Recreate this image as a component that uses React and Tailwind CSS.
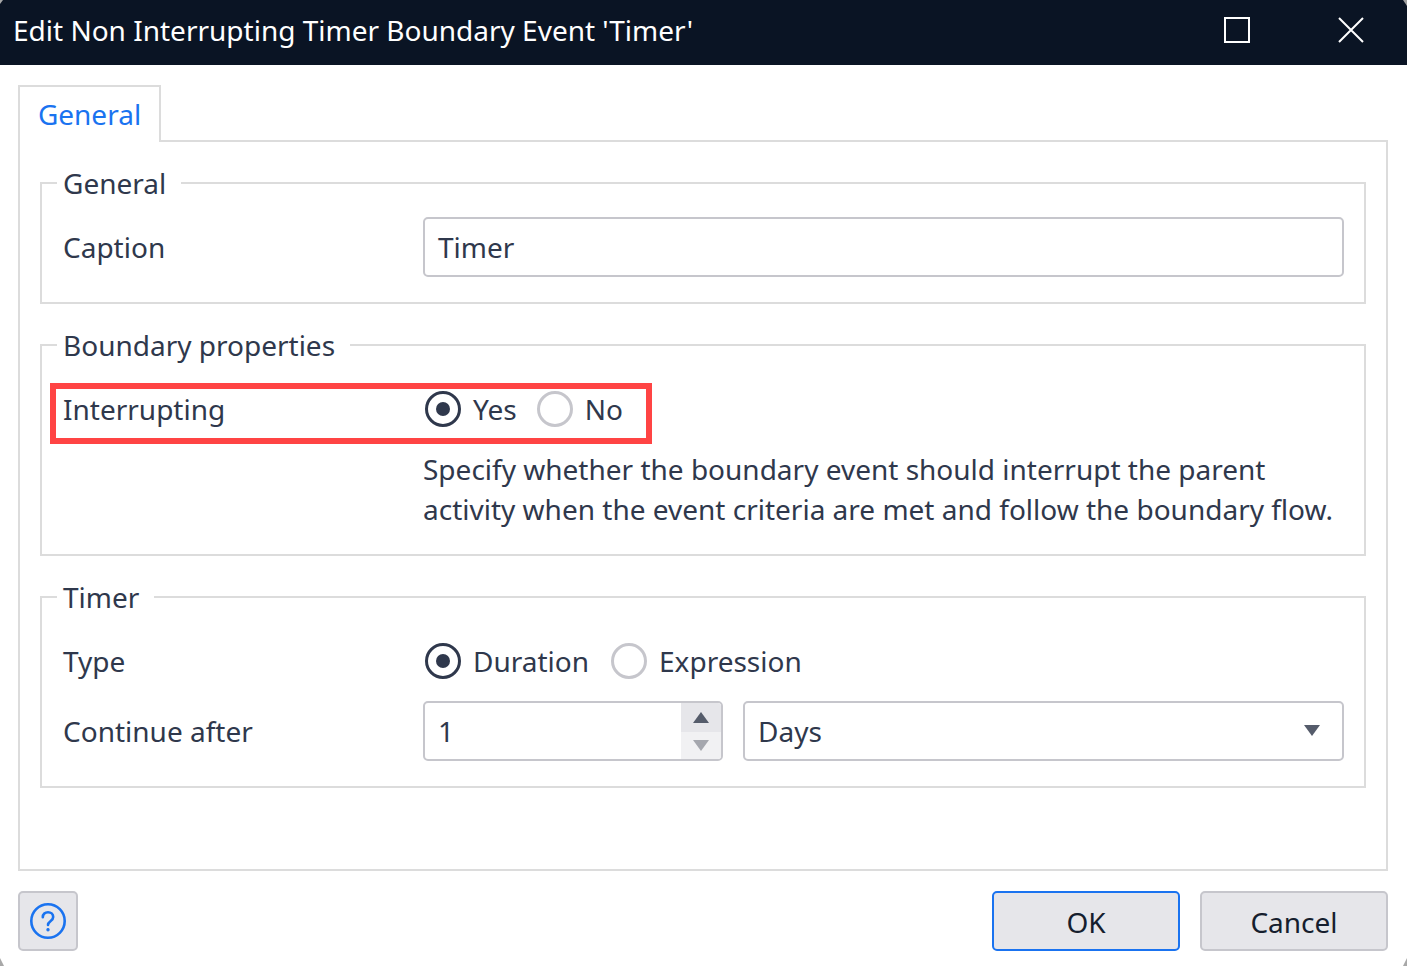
import React from 'react';

const FONT = "font-['Noto_Sans',sans-serif]";

function Radio({ checked, label }) {
	return (
		<span className="flex items-center gap-[12px]">
			<span className={`w-[36px] h-[36px] rounded-full flex items-center justify-center border-[3px] ${checked ? 'border-[#2f384c]' : 'border-[#c6c6cc]'}`}>
				{checked && <span className="w-[14px] h-[14px] rounded-full bg-[#2f384c]"></span>}
			</span>
			<span>{label}</span>
		</span>
	);
}

function Group({ title, children }) {
	return (
		<fieldset className="border-2 border-[#dcdcdc] pl-[21px] pr-[20px] pb-[25px]">
			<legend className="-ml-[6px] pl-[6px] pr-[15px] h-[40px] leading-[40px]">{title}</legend>
			{children}
		</fieldset>
	);
}

function Row({ label, children, className }) {
	return (
		<div className={`grid grid-cols-[360px_1fr] items-center h-[60px] ${className || ''}`}>
			<span>{label}</span>
			{children}
		</div>
	);
}

export default function App() {
	return (
		<div className={`${FONT} relative w-[1407px] h-[966px] bg-white text-[28px] text-[#2f384c] flex flex-col overflow-hidden`}>
			{/* Title bar */}
			<div className="h-[65px] shrink-0 bg-[#0a1424] flex items-center pl-[13px] text-white">
				<span className="flex-1 -mt-[6px]">Edit Non Interrupting Timer Boundary Event 'Timer'</span>
				<svg width="26" height="26" viewBox="0 0 26 26" className="mr-[88px] -mt-[5px]" fill="none" stroke="#fff" strokeWidth="2">
					<rect x="1" y="1" width="24" height="24" />
				</svg>
				<svg width="26" height="26" viewBox="0 0 26 26" className="mr-[43px] -mt-[5px]" fill="none" stroke="#fff" strokeWidth="2">
					<path d="M1 1L25 25M25 1L1 25" />
				</svg>
			</div>

			<div className="flex-1 flex flex-col pl-[18px] pr-[19px] pt-[20px]">
				{/* Tab */}
				<div className="flex h-[57px]">
					<div className="relative z-10 w-[143px] h-[57px] border-2 border-b-0 border-[#dcdcdc] bg-white text-[#1a73f0] flex items-center justify-center pb-[2px]">
						General
					</div>
				</div>

				{/* Tab panel */}
				<div className="h-[731px] -mt-[2px] border-2 border-[#dcdcdc] px-[20px] pt-[21px] flex flex-col gap-[21px]">
					<Group title="General">
						<div className="pt-[14px]">
							<Row label="Caption">
								<div className="h-[60px] border-2 border-[#c6c6cc] rounded-[5px] pl-[13px] flex items-center">Timer</div>
							</Row>
						</div>
					</Group>

					<Group title="Boundary properties">
						<div className="relative pt-[14px]">
							<Row label="Interrupting">
								<div className="flex items-center gap-[20px] pl-[2px]">
									<Radio checked label="Yes" />
									<Radio label="No" />
								</div>
							</Row>
							{/* Red annotation box */}
							<div className="absolute -left-[13px] top-[18px] w-[602px] h-[61px] border-[6px] border-[#ff4444]"></div>
							<p className="mt-[10px] pl-[360px] leading-[40px] whitespace-nowrap">
								Specify whether the boundary event should interrupt the parent<br />
								activity when the event criteria are met and follow the boundary flow.
							</p>
						</div>
					</Group>

					<Group title="Timer">
						<div className="pt-[14px]">
							<Row label="Type">
								<div className="flex items-center gap-[22px] pl-[2px]">
									<Radio checked label="Duration" />
									<Radio label="Expression" />
								</div>
							</Row>
							<Row label="Continue after" className="mt-[10px]">
								<div className="flex gap-[20px]">
									<div className="w-[300px] h-[60px] border-2 border-[#c6c6cc] rounded-[5px] pl-[13px] flex items-center justify-between overflow-hidden">
										<span>1</span>
										<div className="w-[40px] h-full flex flex-col">
											<div className="h-[29px] bg-[#e6e6ea] flex items-center justify-center">
												<svg width="16" height="11" viewBox="0 0 16 11"><path d="M8 0L16 11H0Z" fill="#555c6b" /></svg>
											</div>
											<div className="flex-1 bg-[#f1f1f3] flex items-center justify-center">
												<svg width="16" height="11" viewBox="0 0 16 11"><path d="M0 0H16L8 11Z" fill="#a5a7ae" /></svg>
											</div>
										</div>
									</div>
									<div className="flex-1 h-[60px] border-2 border-[#c6c6cc] rounded-[5px] pl-[13px] pr-[22px] flex items-center justify-between">
										<span>Days</span>
										<svg width="16" height="11" viewBox="0 0 16 11" className="-mt-[1px]"><path d="M0 0H16L8 11Z" fill="#555c6b" /></svg>
									</div>
								</div>
							</Row>
						</div>
					</Group>
				</div>

				{/* Footer buttons */}
				<div className="flex items-center mt-[20px] text-[#161e2e]">
					<button className="w-[60px] h-[60px] bg-[#e6e6ea] border-2 border-[#c6c6cc] rounded-[5px] flex items-center justify-center">
						<svg width="38" height="38" viewBox="0 0 38 38" fill="none" stroke="#1a73f0" strokeWidth="2.6" strokeLinecap="round">
							<circle cx="19" cy="19" r="16.7" />
							<path d="M13.8 15.2c0-3 2.3-5 5.2-5s5.2 1.9 5.2 4.7c0 4.3-5.2 4.3-5.2 8" />
							<circle cx="19" cy="27.7" r="1.1" fill="#1a73f0" stroke="#1a73f0" strokeWidth="1.2" />
						</svg>
					</button>
					<button className="ml-auto w-[188px] h-[60px] bg-[#e6e6ea] border-2 border-[#1a73f0] rounded-[5px] pt-[1px]">OK</button>
					<button className="ml-[20px] w-[188px] h-[60px] bg-[#e6e6ea] border-2 border-[#c6c6cc] rounded-[5px] pt-[1px]">Cancel</button>
				</div>
			</div>

			{/* Window corner slivers */}
			<svg width="4" height="5" viewBox="0 0 4 5" className="absolute left-0 top-0"><path d="M0 0H3L0 4Z" fill="#a8a8a8" /></svg>
			<svg width="4" height="6" viewBox="0 0 4 6" className="absolute right-0 top-0"><path d="M0 0H4V6Z" fill="#a0a0a0" /></svg>
			<svg width="4" height="8" viewBox="0 0 4 8" className="absolute left-0 bottom-0"><path d="M0 0L4 8H0Z" fill="#a8a8a8" /></svg>
			<svg width="4" height="8" viewBox="0 0 4 8" className="absolute right-0 bottom-0"><path d="M4 0V8H0Z" fill="#a8a8a8" /></svg>
		</div>
	);
}
